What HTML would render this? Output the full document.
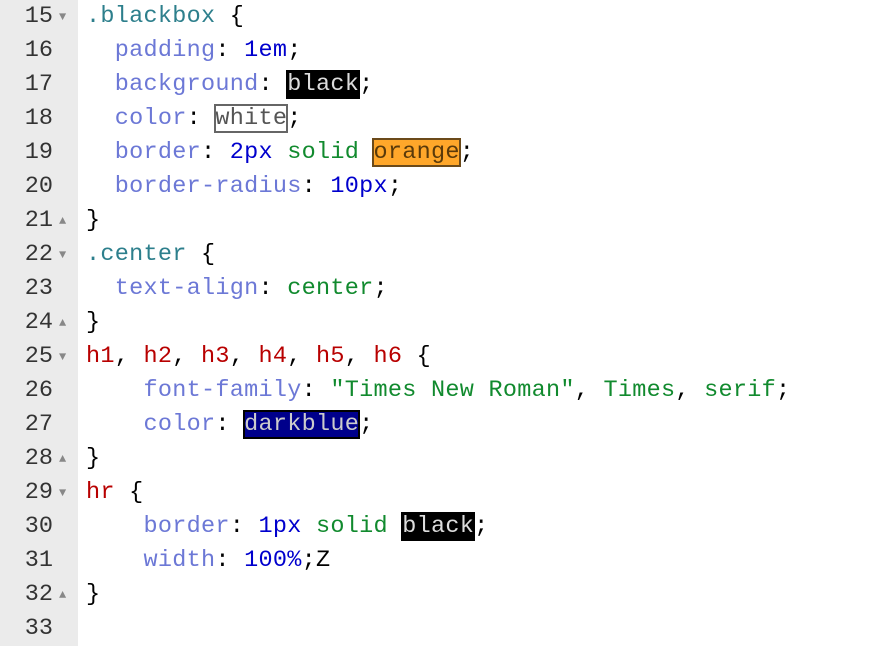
<!DOCTYPE html>
<html><head><style>
html,body{margin:0;padding:0;background:#fff;width:890px;height:646px;overflow:hidden}
.g{position:absolute;left:0;top:0;width:78px;height:646px;background:#ebebeb}
.l{position:absolute;left:0;height:34px;line-height:34px;font-family:"Liberation Mono",monospace;font-size:23.5px;white-space:pre;width:890px}
.n{position:absolute;left:0;width:53px;text-align:right;color:#333}
.a{position:absolute;left:59px;font-size:12px;color:#888}
.c{position:absolute;left:86px;color:#000;letter-spacing:0.27px}
.p{color:#6c78d6}.num{color:#0000cd}.s{color:#118a2e}.sel{color:#2d7f8c}.t{color:#b80000}
.bk{background:#000;color:#ddd;outline:1px solid #000}
.wh{outline:2px solid #666;outline-offset:-1px;color:#555}
.or{background:#ffa72a;color:#5a3a0a;outline:2px solid #6b4a1a;outline-offset:-1px}
.db{background:#00008b;color:#ccc;outline:2px solid #000;outline-offset:-1px}
</style></head><body>
<div class="g"></div>
<div class="l" style="top:0"><span class="n">15</span><span class="a">▼</span><span class="c"><span class="sel">.blackbox</span> {</span></div>
<div class="l" style="top:34px"><span class="n">16</span><span class="c">  <span class="p">padding</span>: <span class="num">1em</span>;</span></div>
<div class="l" style="top:68px"><span class="n">17</span><span class="c">  <span class="p">background</span>: <span class="bk">black</span>;</span></div>
<div class="l" style="top:102px"><span class="n">18</span><span class="c">  <span class="p">color</span>: <span class="wh">white</span>;</span></div>
<div class="l" style="top:136px"><span class="n">19</span><span class="c">  <span class="p">border</span>: <span class="num">2px</span> <span class="s">solid</span> <span class="or">orange</span>;</span></div>
<div class="l" style="top:170px"><span class="n">20</span><span class="c">  <span class="p">border-radius</span>: <span class="num">10px</span>;</span></div>
<div class="l" style="top:204px"><span class="n">21</span><span class="a">▲</span><span class="c">}</span></div>
<div class="l" style="top:238px"><span class="n">22</span><span class="a">▼</span><span class="c"><span class="sel">.center</span> {</span></div>
<div class="l" style="top:272px"><span class="n">23</span><span class="c">  <span class="p">text-align</span>: <span class="s">center</span>;</span></div>
<div class="l" style="top:306px"><span class="n">24</span><span class="a">▲</span><span class="c">}</span></div>
<div class="l" style="top:340px"><span class="n">25</span><span class="a">▼</span><span class="c"><span class="t">h1</span>, <span class="t">h2</span>, <span class="t">h3</span>, <span class="t">h4</span>, <span class="t">h5</span>, <span class="t">h6</span> {</span></div>
<div class="l" style="top:374px"><span class="n">26</span><span class="c">    <span class="p">font-family</span>: <span class="s">"Times New Roman"</span>, <span class="s">Times</span>, <span class="s">serif</span>;</span></div>
<div class="l" style="top:408px"><span class="n">27</span><span class="c">    <span class="p">color</span>: <span class="db">darkblue</span>;</span></div>
<div class="l" style="top:442px"><span class="n">28</span><span class="a">▲</span><span class="c">}</span></div>
<div class="l" style="top:476px"><span class="n">29</span><span class="a">▼</span><span class="c"><span class="t">hr</span> {</span></div>
<div class="l" style="top:510px"><span class="n">30</span><span class="c">    <span class="p">border</span>: <span class="num">1px</span> <span class="s">solid</span> <span class="bk">black</span>;</span></div>
<div class="l" style="top:544px"><span class="n">31</span><span class="c">    <span class="p">width</span>: <span class="num">100%</span>;Z</span></div>
<div class="l" style="top:578px"><span class="n">32</span><span class="a">▲</span><span class="c">}</span></div>
<div class="l" style="top:612px"><span class="n">33</span></div>
</body></html>
